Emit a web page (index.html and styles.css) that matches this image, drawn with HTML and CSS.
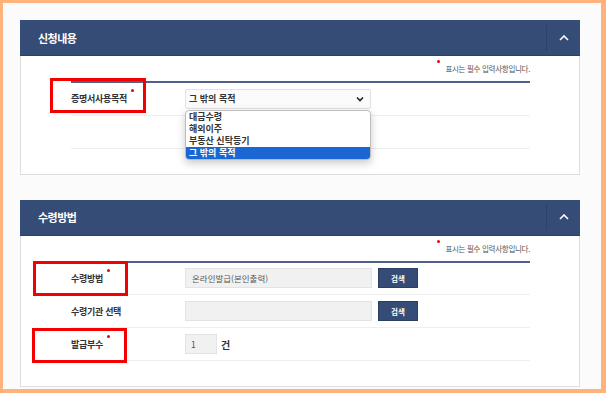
FILE: index.html
```
<!DOCTYPE html>
<html lang="ko">
<head>
  <meta charset="UTF-8" />
  <title>신청내용 / 수령방법</title>
  <link rel="stylesheet" href="styles.css">
</head>
<body>
<div class="frame">

  <!-- 신청내용 -->
  <section class="panel">
    <div class="panel-head">
      <h2>신청내용</h2>
      <span class="toggle"><svg width="10" height="6" viewBox="0 0 10 6"><path d="M1 5 L5 1 L9 5" fill="none" stroke="#fff" stroke-width="1.6"/></svg></span>
    </div>
    <div class="panel-body">
      <p class="note"><i class="dot"></i>표시는 필수 입력사항입니다.</p>
      <table class="form">
        <tr>
          <th><span class="label">증명서사용목적<i class="dot"></i></span></th>
          <td>
            <div class="select">
              <span>그 밖의 목적</span>
              <svg width="8" height="6" viewBox="0 0 8 6"><path d="M1 1.5 L4 4.5 L7 1.5" fill="none" stroke="#222" stroke-width="1.6"/></svg>
              <ul class="options">
                <li>대금수령</li>
                <li>해외이주</li>
                <li>부동산 신탁등기</li>
                <li class="on">그 밖의 목적</li>
              </ul>
            </div>
          </td>
        </tr>
        <tr><th></th><td></td></tr>
      </table>
    </div>
  </section>

  <!-- 수령방법 -->
  <section class="panel">
    <div class="panel-head">
      <h2>수령방법</h2>
      <span class="toggle"><svg width="10" height="6" viewBox="0 0 10 6"><path d="M1 5 L5 1 L9 5" fill="none" stroke="#fff" stroke-width="1.6"/></svg></span>
    </div>
    <div class="panel-body">
      <p class="note"><i class="dot"></i>표시는 필수 입력사항입니다.</p>
      <table class="form">
        <tr>
          <th><span class="label">수령방법<i class="dot"></i></span></th>
          <td><span class="field">온라인발급(본인출력)</span><button class="btn">검색</button></td>
        </tr>
        <tr>
          <th><span class="label">수령기관 선택</span></th>
          <td><span class="field"></span><button class="btn">검색</button></td>
        </tr>
        <tr>
          <th><span class="label">발급부수<i class="dot"></i></span></th>
          <td><span class="field small">1</span><span class="unit">건</span></td>
        </tr>
      </table>
    </div>
  </section>

  <!-- annotation boxes -->
  <div class="mark m1"></div>
  <div class="mark m2"></div>
  <div class="mark m3"></div>
</div>
</body>
</html>
```

FILE: styles.css
```
* { box-sizing: border-box; }
body { margin: 0; font-family: "Noto Sans CJK KR", "Noto Sans", sans-serif; color: #333; background: #fff; }
.frame { position: relative; width: 606px; height: 393px; border: solid #ffb27c; border-width: 3px 5px 4px 3px; background: #fbfbfb; padding: 17px 21px 0 17px; display: flex; flex-direction: column; gap: 25px; overflow: hidden; }

.panel { background: #fff; border: 1px solid #dedede; }
.panel-head { height: 36px; background: #344c76; border-bottom: 1px solid #2b3f63; display: flex; align-items: center; justify-content: space-between; margin: -1px -1px 0; }
.panel-head h2 { margin: 0 0 0 18px; color: #fff; font-size: 11px; font-weight: bold; letter-spacing: -0.5px; }
.toggle { width: 34px; height: 26px; border-left: 1px solid #2c4167; display: flex; align-items: center; justify-content: center; }
.toggle svg { display: block; }

.panel-body { padding: 0 49px 25px 50px; }
.note { margin: 0; height: 25px; padding-top: 7px; text-align: right; font-size: 7.5px; color: #555; letter-spacing: -0.3px; }
.note .dot { position: relative; top: -3px; margin-right: 5px; }
.dot { display: inline-block; width: 3px; height: 3px; border-radius: 50%; background: #e00; vertical-align: top; }

.form { width: 100%; border-collapse: collapse; border-top: 2px solid #4f6189; }
.form th, .form td { height: 33px; border-bottom: 1px solid #eee; padding: 0; vertical-align: middle; }
.form th { width: 114px; text-align: left; font-size: 9px; font-weight: bold; color: #333; letter-spacing: -0.3px; }
.form td { font-size: 9px; }
.label .dot { margin: -3px 0 0 4px; }

.select { position: relative; width: 186px; height: 20px; border: 1px solid #e2e2e2; border-radius: 2px; background: #fbfbfb; display: flex; align-items: center; justify-content: space-between; padding: 0 6px 0 3px; font-size: 9px; font-weight: bold; color: #333; }
.options { position: absolute; top: 20px; left: -1px; width: 186px; margin: 0; padding: 0; list-style: none; background: #fff; border: 1px solid #bdbdbd; border-radius: 4px; box-shadow: 0 3px 8px rgba(0,0,0,0.22); overflow: hidden; z-index: 2; }
.options li { height: 12px; line-height: 12px; padding-left: 3px; font-size: 9px; font-weight: bold; color: #333; }
.options li.on { background: #1a66d2; color: #fff; }

.field { display: inline-block; vertical-align: middle; width: 187px; height: 20px; line-height: 18px; border: 1px solid #e3e3e3; background: #f1f1f1; padding-left: 6px; font-size: 8.5px; color: #555; }
.field.small { width: 32px; padding-left: 5px; }
.btn { vertical-align: middle; margin-left: 6px; width: 40px; height: 20px; border: 1px solid #2b3f63; background: #344c76; color: #fff; font-family: inherit; font-size: 7.5px; font-weight: bold; padding: 0; }
.unit { margin-left: 4px; font-size: 10px; font-weight: bold; vertical-align: middle; }

.mark { position: absolute; border: 3px solid #f40000; }
.m1 { left: 47px; top: 75px; width: 96px; height: 35px; }
.m2 { left: 30px; top: 258px; width: 95px; height: 35px; }
.m3 { left: 29px; top: 325px; width: 95px; height: 35px; }
```
